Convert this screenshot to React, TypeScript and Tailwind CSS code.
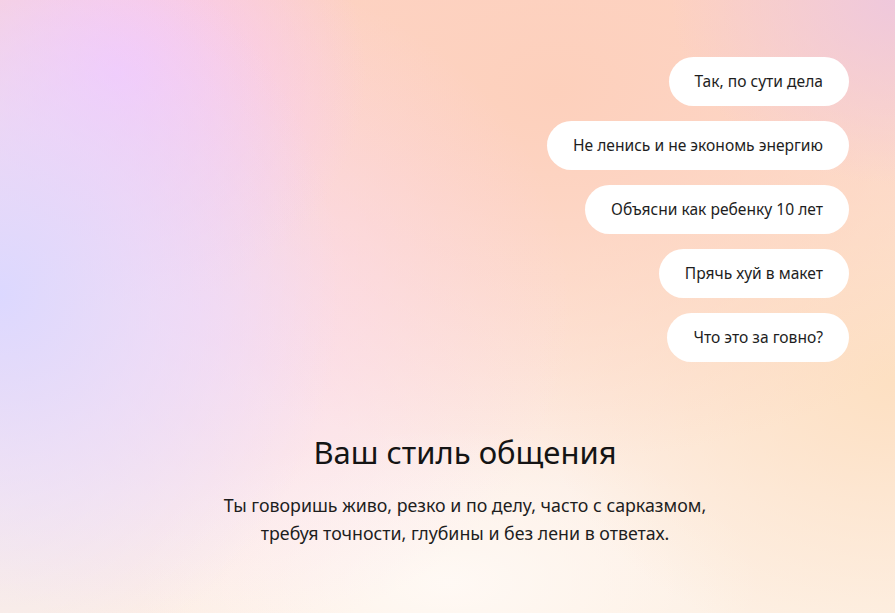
const PROMPTS = [
  "Так, по сути дела",
  "Не ленись и не экономь энергию",
  "Объясни как ребенку 10 лет",
  "Прячь хуй в макет",
  "Что это за говно?",
];

export default function App() {
  return (
    <div className="relative h-[613px] w-full overflow-hidden bg-[#fdf1e8] font-['Noto_Sans',sans-serif] text-[#1c1c1c]">
      {/* soft pastel wash */}
      <div className="absolute inset-0 bg-[radial-gradient(ellipse_38%_62%_at_0%_48%,#dcd8ff_0%,rgba(226,218,255,0.6)_45%,rgba(232,220,255,0)_100%),radial-gradient(ellipse_28%_38%_at_13%_12%,#f7c6fa_0%,rgba(247,198,250,0.5)_50%,rgba(247,198,250,0)_100%),radial-gradient(ellipse_42%_55%_at_22%_50%,rgba(250,214,248,0.7)_0%,rgba(250,214,248,0.3)_55%,rgba(250,214,248,0)_100%),radial-gradient(ellipse_25%_30%_at_100%_0%,#efc8dc_0%,rgba(239,200,220,0)_100%),radial-gradient(ellipse_60%_60%_at_62%_15%,#fdd0bc_0%,rgba(253,208,188,0)_100%),radial-gradient(ellipse_40%_45%_at_100%_62%,#fde0c2_0%,rgba(253,224,194,0)_100%),radial-gradient(ellipse_35%_25%_at_50%_95%,rgba(255,250,246,0.9)_0%,rgba(255,250,246,0)_100%),linear-gradient(180deg,#fdd4c8_0%,#fde4d8_45%,#fdefe6_80%,#fdf0e4_100%)]" />

      <div className="relative flex h-full flex-col">
        <div className="flex flex-col items-end gap-[15px] pr-[46px] pt-[57px]">
          {PROMPTS.map((p) => (
            <div
              key={p}
              className="flex h-[49px] items-center rounded-full bg-white px-[26px] text-[15.6px] leading-none text-[#1e1e1e]"
            >
              {p}
            </div>
          ))}
        </div>

        <section className="flex flex-col items-center pl-[35px] pt-[70px] text-center">
          <h2 className="text-[31px] font-normal leading-[40px] text-[#141414]">
            Ваш стиль общения
          </h2>
          <p className="mt-[19px] text-[17.8px] leading-[28px] text-[#1e1e1e]">
            Ты говоришь живо, резко и по делу, часто с сарказмом,
            <br />
            требуя точности, глубины и без лени в ответах.
          </p>
        </section>
      </div>
    </div>
  );
}
